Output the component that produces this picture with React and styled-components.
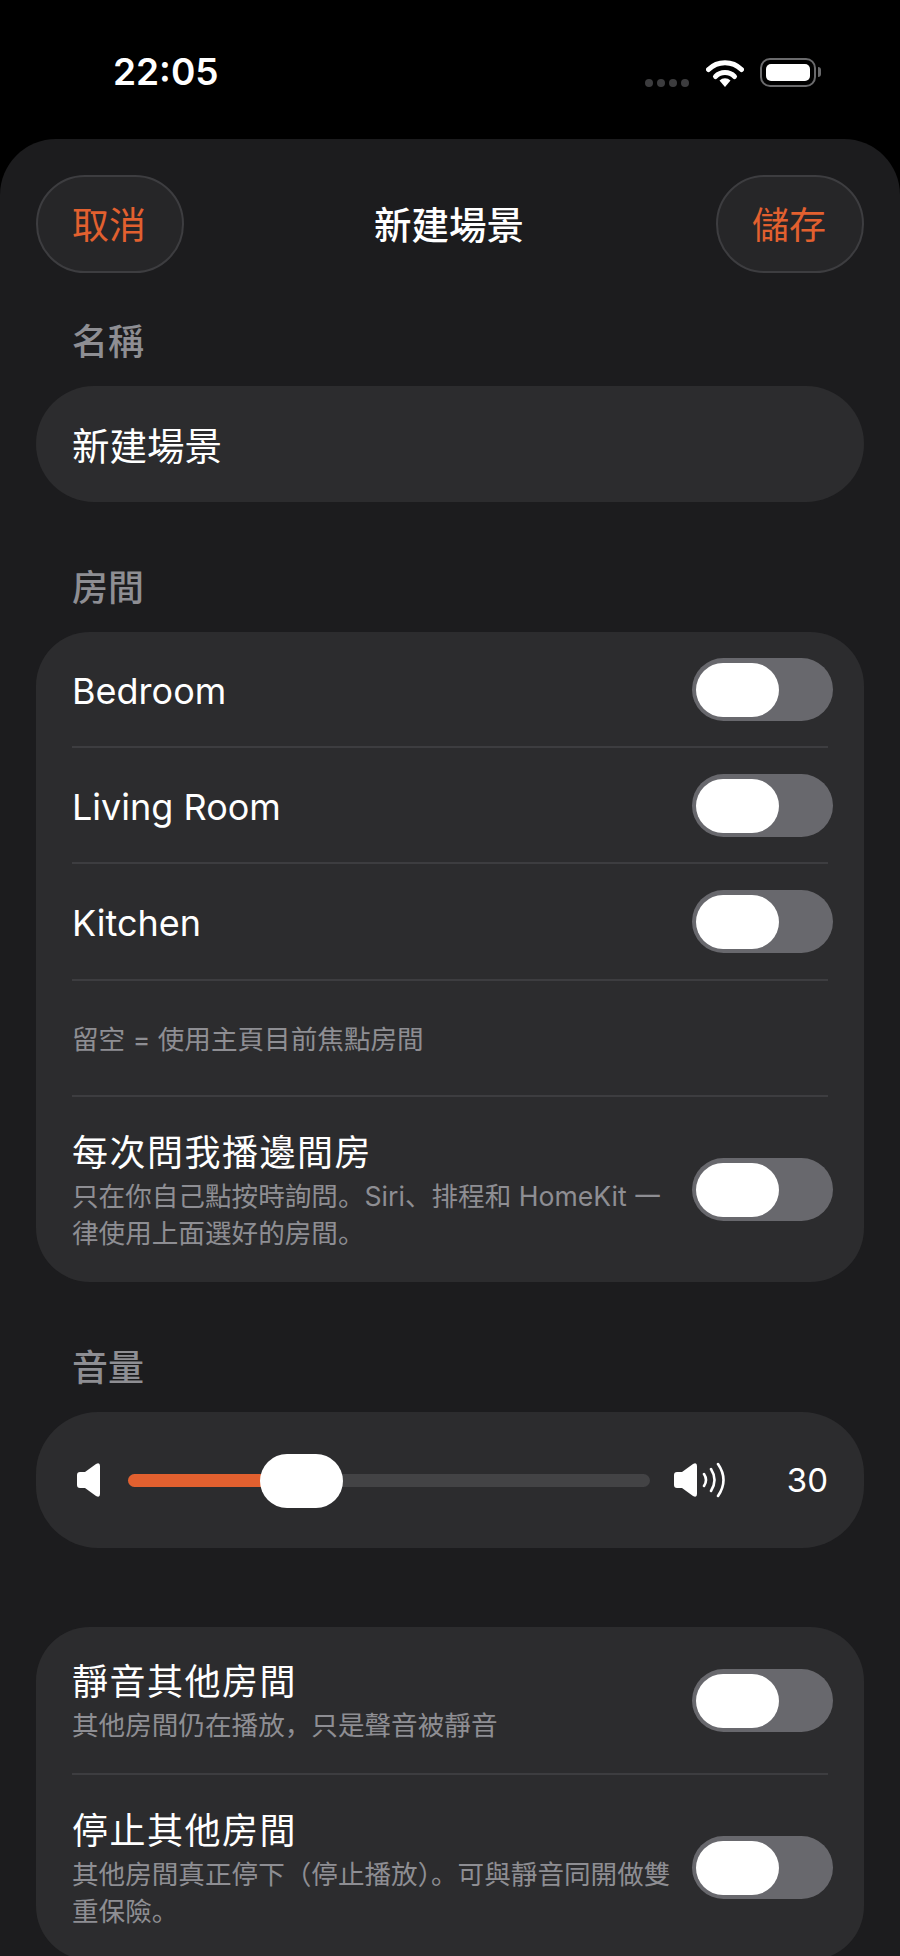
import React from 'react';
import styled, { createGlobalStyle } from 'styled-components';

const GlobalStyle = createGlobalStyle`
  html, body {
    margin: 0;
    height: 1956px;
    overflow: hidden;
    background: #000;
  }
  * {
    box-sizing: border-box;
  }
`;

const Screen = styled.div`
  width: 900px;
  height: 1956px;
  overflow: hidden;
  background: #000;
  color: #fff;
  font-family: Inter, 'Noto Sans CJK SC', sans-serif;
`;

const StatusBar = styled.div`
  height: 139px;
  padding: 50px 84px 0 113px;
  display: flex;
  justify-content: space-between;
  align-items: flex-start;
`;

const Clock = styled.div`
  font-size: 37px;
  line-height: 44px;
  font-weight: 600;
`;

const StatusIcons = styled.div`
  display: flex;
  align-items: flex-start;
  margin-top: 8px;
`;

const SignalDots = styled.div`
  display: flex;
  gap: 4px;
  margin: 21px 17px 0 0;
`;

const SignalDot = styled.span`
  width: 8px;
  height: 8px;
  border-radius: 50%;
  background: #3c3c3e;
`;

const WifiIcon = styled.svg`
  width: 38px;
  height: 30px;
  margin-right: 16px;
`;

const Battery = styled.div`
  width: 56px;
  height: 29px;
  padding: 4px;
  border: 2.5px solid #6a6a6c;
  border-radius: 10px;
  position: relative;

  &::before {
    content: '';
    display: block;
    height: 100%;
    border-radius: 5px;
    background: #fff;
  }

  &::after {
    content: '';
    position: absolute;
    right: -7px;
    top: 7px;
    width: 3px;
    height: 10px;
    border-radius: 0 3px 3px 0;
    background: #6a6a6c;
  }
`;

const Sheet = styled.div`
  height: 1817px;
  padding: 36px;
  background: #1c1c1e;
  border-radius: 56px 56px 0 0;
`;

const NavBar = styled.div`
  display: flex;
  justify-content: space-between;
  align-items: center;
  height: 98px;
`;

const NavButton = styled.div`
  width: 148px;
  height: 98px;
  padding: 0 2px 3px 0;
  border-radius: 49px;
  border: 2px solid #3d3d40;
  background: #262628;
  color: #e2602f;
  display: flex;
  align-items: center;
  justify-content: center;
  font-size: 37px;
`;

const NavTitle = styled.div`
  font-size: 37.5px;
  font-weight: 500;
  padding: 0 2px 3px 0;
`;

const SectionLabel = styled.div`
  margin: ${(p) => p.$top}px 0 22px 36px;
  font-size: 36px;
  line-height: 44px;
  font-weight: 500;
  color: #8e8e93;
`;

const NameField = styled.div`
  height: 116px;
  padding: 0 36px 2px;
  border-radius: 58px;
  background: #2c2c2e;
  display: flex;
  align-items: center;
  font-size: 37.5px;
`;

const Card = styled.div`
  margin-top: ${(p) => p.$top || 0}px;
  padding: 0 36px;
  border-radius: 54px;
  background: #2c2c2e;
`;

const Row = styled.div`
  min-height: ${(p) => p.$height}px;
  display: flex;
  align-items: center;
  gap: 14px;
  border-bottom: ${(p) => (p.$last ? 'none' : '2px solid #3d3d40')};
`;

const RowText = styled.div`
  flex: 1;
  min-width: 0;
  padding-top: 3px;
`;

const RowTitle = styled.div`
  font-size: 36px;
  line-height: 44px;
  letter-spacing: ${(p) => (p.$cjk ? '1.5px' : '0')};
`;

const RowNote = styled.div`
  font-size: 26.6px;
  line-height: 37px;
  color: #8e8e93;
  margin-top: 3px;
  text-spacing-trim: normal;
`;

const Toggle = styled.div`
  flex: none;
  width: 141px;
  height: 63px;
  margin-right: -5px;
  padding: 5px 0 0 4px;
  border-radius: 32px;
  background: #68686d;
`;

const ToggleKnob = styled.div`
  width: 83px;
  height: 54px;
  border-radius: 27px;
  background: #fff;
`;

const VolumeCard = styled(Card)`
  height: 136px;
  padding: 0 36px 0 41px;
  border-radius: 62px;
  display: flex;
  align-items: center;
`;

const SpeakerIcon = styled.svg`
  flex: none;
  display: block;
  fill: #fff;
`;

const Slider = styled.div`
  flex: 1;
  height: 13px;
  margin: 0 24px 0 28px;
  border-radius: 7px;
  background: #434345;
  position: relative;
`;

const SliderFill = styled.div`
  height: 100%;
  border-radius: 7px 0 0 7px;
  background: #e2602f;
`;

const SliderKnob = styled.div`
  position: absolute;
  top: -20px;
  width: 83px;
  height: 54px;
  border-radius: 27px;
  background: #fff;
`;

const VolumeValue = styled.div`
  width: 102px;
  text-align: right;
  font-size: 33px;
`;

const volume = 30;
const knobLeft = `calc((100% - 83px) * ${volume / 100})`;

function Switch() {
  return (
    <Toggle>
      <ToggleKnob />
    </Toggle>
  );
}

function App() {
  return (
    <Screen>
      <GlobalStyle />
      <StatusBar>
        <Clock>22:05</Clock>
        <StatusIcons>
          <SignalDots>
            <SignalDot />
            <SignalDot />
            <SignalDot />
            <SignalDot />
          </SignalDots>
          <WifiIcon viewBox="0 0 38 30">
            <path d="M2.5 11.5a23.5 23.5 0 0 1 33 0" fill="none" stroke="#fff" strokeWidth="5" strokeLinecap="round" />
            <path d="M9.5 18.5a13.5 13.5 0 0 1 19 0" fill="none" stroke="#fff" strokeWidth="5" strokeLinecap="round" />
            <path d="M13.5 22.5a8 8 0 0 1 11 0L19 29z" fill="#fff" />
          </WifiIcon>
          <Battery />
        </StatusIcons>
      </StatusBar>
      <Sheet>
        <NavBar>
          <NavButton>取消</NavButton>
          <NavTitle>新建場景</NavTitle>
          <NavButton>儲存</NavButton>
        </NavBar>

        <SectionLabel $top={47}>名稱</SectionLabel>
        <NameField>新建場景</NameField>

        <SectionLabel $top={64}>房間</SectionLabel>
        <Card>
          <Row $height={116}>
            <RowText><RowTitle>Bedroom</RowTitle></RowText>
            <Switch />
          </Row>
          <Row $height={116}>
            <RowText><RowTitle>Living Room</RowTitle></RowText>
            <Switch />
          </Row>
          <Row $height={117}>
            <RowText><RowTitle>Kitchen</RowTitle></RowText>
            <Switch />
          </Row>
          <Row $height={116}>
            <RowNote>留空 = 使用主頁目前焦點房間</RowNote>
          </Row>
          <Row $height={185} $last>
            <RowText>
              <RowTitle $cjk>每次問我播邊間房</RowTitle>
              <RowNote>只在你自己點按時詢問。Siri、排程和 HomeKit 一律使用上面選好的房間。</RowNote>
            </RowText>
            <Switch />
          </Row>
        </Card>

        <SectionLabel $top={64}>音量</SectionLabel>
        <VolumeCard>
          <SpeakerIcon width="23" height="34" viewBox="0 0 23 34">
            <path d="M0 12q0-3 3-3h5L19 1q4-2 4 2v28q0 4-4 2L8 25H3q-3 0-3-3z" />
          </SpeakerIcon>
          <Slider>
            <SliderFill style={{ width: `calc(${knobLeft} + 40px)` }} />
            <SliderKnob style={{ left: knobLeft }} />
          </Slider>
          <SpeakerIcon width="52" height="36" viewBox="0 0 52 36">
            <path d="M0 13q0-3 3-3h5L19 2q4-2 4 2v28q0 4-4 2L8 26H3q-3 0-3-3z" />
            <path d="M30 12q4 6 0 12M37 7q7 11 0 22M44 2q11 16 0 32" fill="none" stroke="#fff" strokeWidth="2.6" strokeLinecap="round" />
          </SpeakerIcon>
          <VolumeValue>30</VolumeValue>
        </VolumeCard>

        <Card $top={79}>
          <Row $height={148}>
            <RowText>
              <RowTitle $cjk>靜音其他房間</RowTitle>
              <RowNote>其他房間仍在播放，只是聲音被靜音</RowNote>
            </RowText>
            <Switch />
          </Row>
          <Row $height={185} $last>
            <RowText>
              <RowTitle $cjk>停止其他房間</RowTitle>
              <RowNote>其他房間真正停下（停止播放）。可與靜音同開做雙重保險。</RowNote>
            </RowText>
            <Switch />
          </Row>
        </Card>
      </Sheet>
    </Screen>
  );
}

export default App;
